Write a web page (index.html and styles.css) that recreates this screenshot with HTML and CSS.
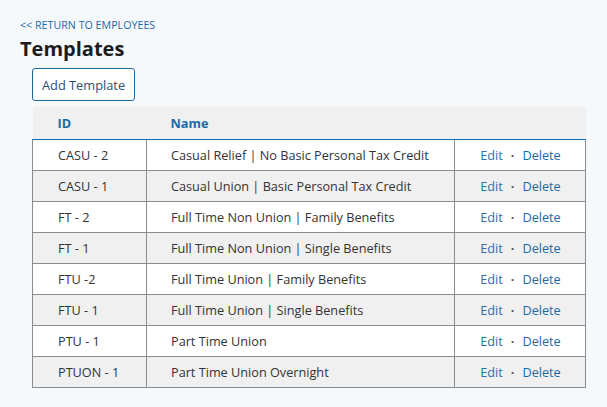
FILE: index.html
```html
<!DOCTYPE html>
<html lang="en">
<head>
    <meta charset="UTF-8">
    <title>Templates</title>
    <link rel="stylesheet" href="styles.css">
</head>
<body>
    <div class="page">
        <a href="#" class="back-link">&lt;&lt; Return to Employees</a>
        <h1>Templates</h1>
        <div class="content">
            <button type="button" class="add-button">Add Template</button>
            <table class="templates-table">
                <thead>
                    <tr>
                        <th class="col-id">ID</th>
                        <th class="col-name">Name</th>
                        <th class="col-actions"></th>
                    </tr>
                </thead>
                <tbody>
                    <tr>
                        <td>CASU - 2</td>
                        <td>Casual Relief | No Basic Personal Tax Credit</td>
                        <td class="actions"><a href="#" class="edit">Edit</a><span class="sep">·</span><a href="#">Delete</a></td>
                    </tr>
                    <tr>
                        <td>CASU - 1</td>
                        <td>Casual Union | Basic Personal Tax Credit</td>
                        <td class="actions"><a href="#" class="edit">Edit</a><span class="sep">·</span><a href="#">Delete</a></td>
                    </tr>
                    <tr>
                        <td>FT - 2</td>
                        <td>Full Time Non Union | Family Benefits</td>
                        <td class="actions"><a href="#" class="edit">Edit</a><span class="sep">·</span><a href="#">Delete</a></td>
                    </tr>
                    <tr>
                        <td>FT - 1</td>
                        <td>Full Time Non Union | Single Benefits</td>
                        <td class="actions"><a href="#" class="edit">Edit</a><span class="sep">·</span><a href="#">Delete</a></td>
                    </tr>
                    <tr>
                        <td>FTU -2</td>
                        <td>Full Time Union | Family Benefits</td>
                        <td class="actions"><a href="#" class="edit">Edit</a><span class="sep">·</span><a href="#">Delete</a></td>
                    </tr>
                    <tr>
                        <td>FTU - 1</td>
                        <td>Full Time Union | Single Benefits</td>
                        <td class="actions"><a href="#" class="edit">Edit</a><span class="sep">·</span><a href="#">Delete</a></td>
                    </tr>
                    <tr>
                        <td>PTU - 1</td>
                        <td>Part Time Union</td>
                        <td class="actions"><a href="#" class="edit">Edit</a><span class="sep">·</span><a href="#">Delete</a></td>
                    </tr>
                    <tr>
                        <td>PTUON - 1</td>
                        <td>Part Time Union Overnight</td>
                        <td class="actions"><a href="#" class="edit">Edit</a><span class="sep">·</span><a href="#">Delete</a></td>
                    </tr>
                </tbody>
            </table>
        </div>
    </div>
</body>
</html>
```

FILE: styles.css
```css
* {
    margin: 0;
    padding: 0;
    box-sizing: border-box;
}

body {
    background: #f5f9fc;
    font-family: "Open Sans", Arial, sans-serif;
    color: #333;
}

.page {
    padding: 18px 20px 0 20px;
}

.back-link {
    display: block;
    font-size: 10.7px;
    line-height: 15px;
    text-transform: uppercase;
    color: #1b6aa5;
    text-decoration: none;
}

h1 {
    font-size: 20px;
    font-weight: 700;
    line-height: 28px;
    margin-top: 2px;
    color: #1c1c1c;
}

.content {
    padding-left: 12px;
    width: 565px;
}

.add-button {
    display: block;
    margin-top: 5px;
    height: 33px;
    padding: 0 9px;
    border: 1px solid #1d6a9e;
    border-radius: 3px;
    background: #fff;
    font-family: inherit;
    font-size: 12.8px;
    color: #2e4f73;
    cursor: pointer;
}

.templates-table {
    width: 553px;
    margin-top: 6px;
    border-collapse: collapse;
    table-layout: fixed;
    font-size: 12.7px;
}

.templates-table th {
    background: #f0f0f0;
    height: 32px;
    text-align: left;
    font-weight: 700;
    color: #1b6aa5;
    padding: 0 25px;
    border-bottom: 1px solid #1b6aa5;
}

.templates-table td {
    height: 31px;
    padding: 0 24px;
    border: 1px solid #8c8c8c;
    white-space: nowrap;
}

.templates-table td:first-child {
    padding-left: 25px;
}

.col-id {
    width: 114px;
}

.col-name {
    width: 308px;
}

.col-actions {
    width: 131px;
}

.templates-table th.col-name {
    padding-left: 24px;
}

.templates-table tbody tr:nth-child(even) {
    background: #f0f0f0;
}

.templates-table tbody tr:nth-child(odd) {
    background: #fff;
}

.templates-table td.actions {
    text-align: center;
    padding: 0 0 0 1px;
}

.actions a {
    color: #1b6aa5;
    text-decoration: none;
}

.actions a.edit {
    color: #2f6ea8;
}

.sep {
    color: #555;
    padding: 0 8px;
    font-weight: 700;
}
```
